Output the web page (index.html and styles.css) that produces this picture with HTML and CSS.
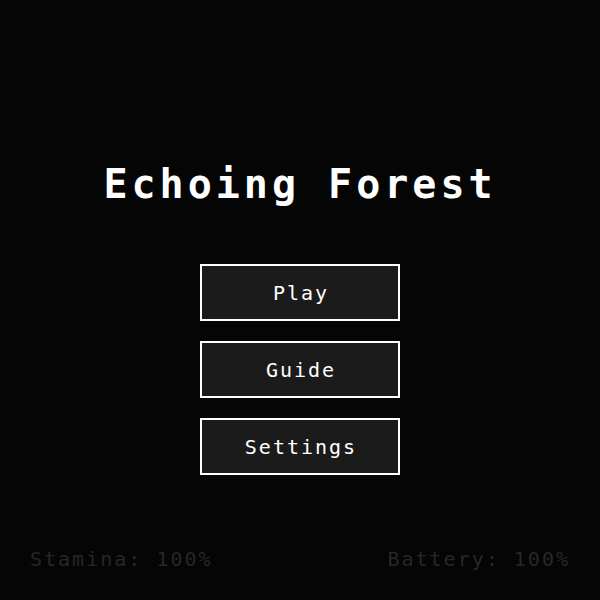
FILE: index.html
```html
<!DOCTYPE html>
<html>
<head>
<meta charset="utf-8">
<link rel="stylesheet" href="styles.css">
</head>
<body>
<div class="screen">
  <main class="menu">
    <h1 class="title">Echoing Forest</h1>
    <div class="buttons">
      <button class="btn">Play</button>
      <button class="btn">Guide</button>
      <button class="btn">Settings</button>
    </div>
  </main>
  <footer class="status">
    <span>Stamina: 100%</span>
    <span>Battery: 100%</span>
  </footer>
</div>
</body>
</html>
```
FILE: styles.css
```css
html, body {
  margin: 0;
  padding: 0;
  background: #050505;
}
.screen {
  width: 600px;
  height: 600px;
  display: flex;
  flex-direction: column;
  font-family: "DejaVu Sans Mono", "Liberation Mono", monospace;
  color: #ffffff;
}
.menu {
  flex: 1;
  display: flex;
  flex-direction: column;
  align-items: center;
  padding-top: 160px;
}
.title {
  margin: 0;
  font-size: 40px;
  font-weight: bold;
  line-height: 48px;
  letter-spacing: 4px;
}
.buttons {
  margin-top: 56px;
  display: flex;
  flex-direction: column;
  gap: 20px;
}
.btn {
  width: 200px;
  height: 57px;
  box-sizing: border-box;
  border: 2px solid #ffffff;
  background: #1b1b1b;
  color: #ffffff;
  font-family: inherit;
  font-size: 20px;
  letter-spacing: 2px;
  padding: 0 0 0 2px;
}
.status {
  display: flex;
  justify-content: space-between;
  padding: 0 30px 29px 30px;
  font-size: 20px;
  line-height: 24px;
  letter-spacing: 2px;
  color: #272727;
}
```
